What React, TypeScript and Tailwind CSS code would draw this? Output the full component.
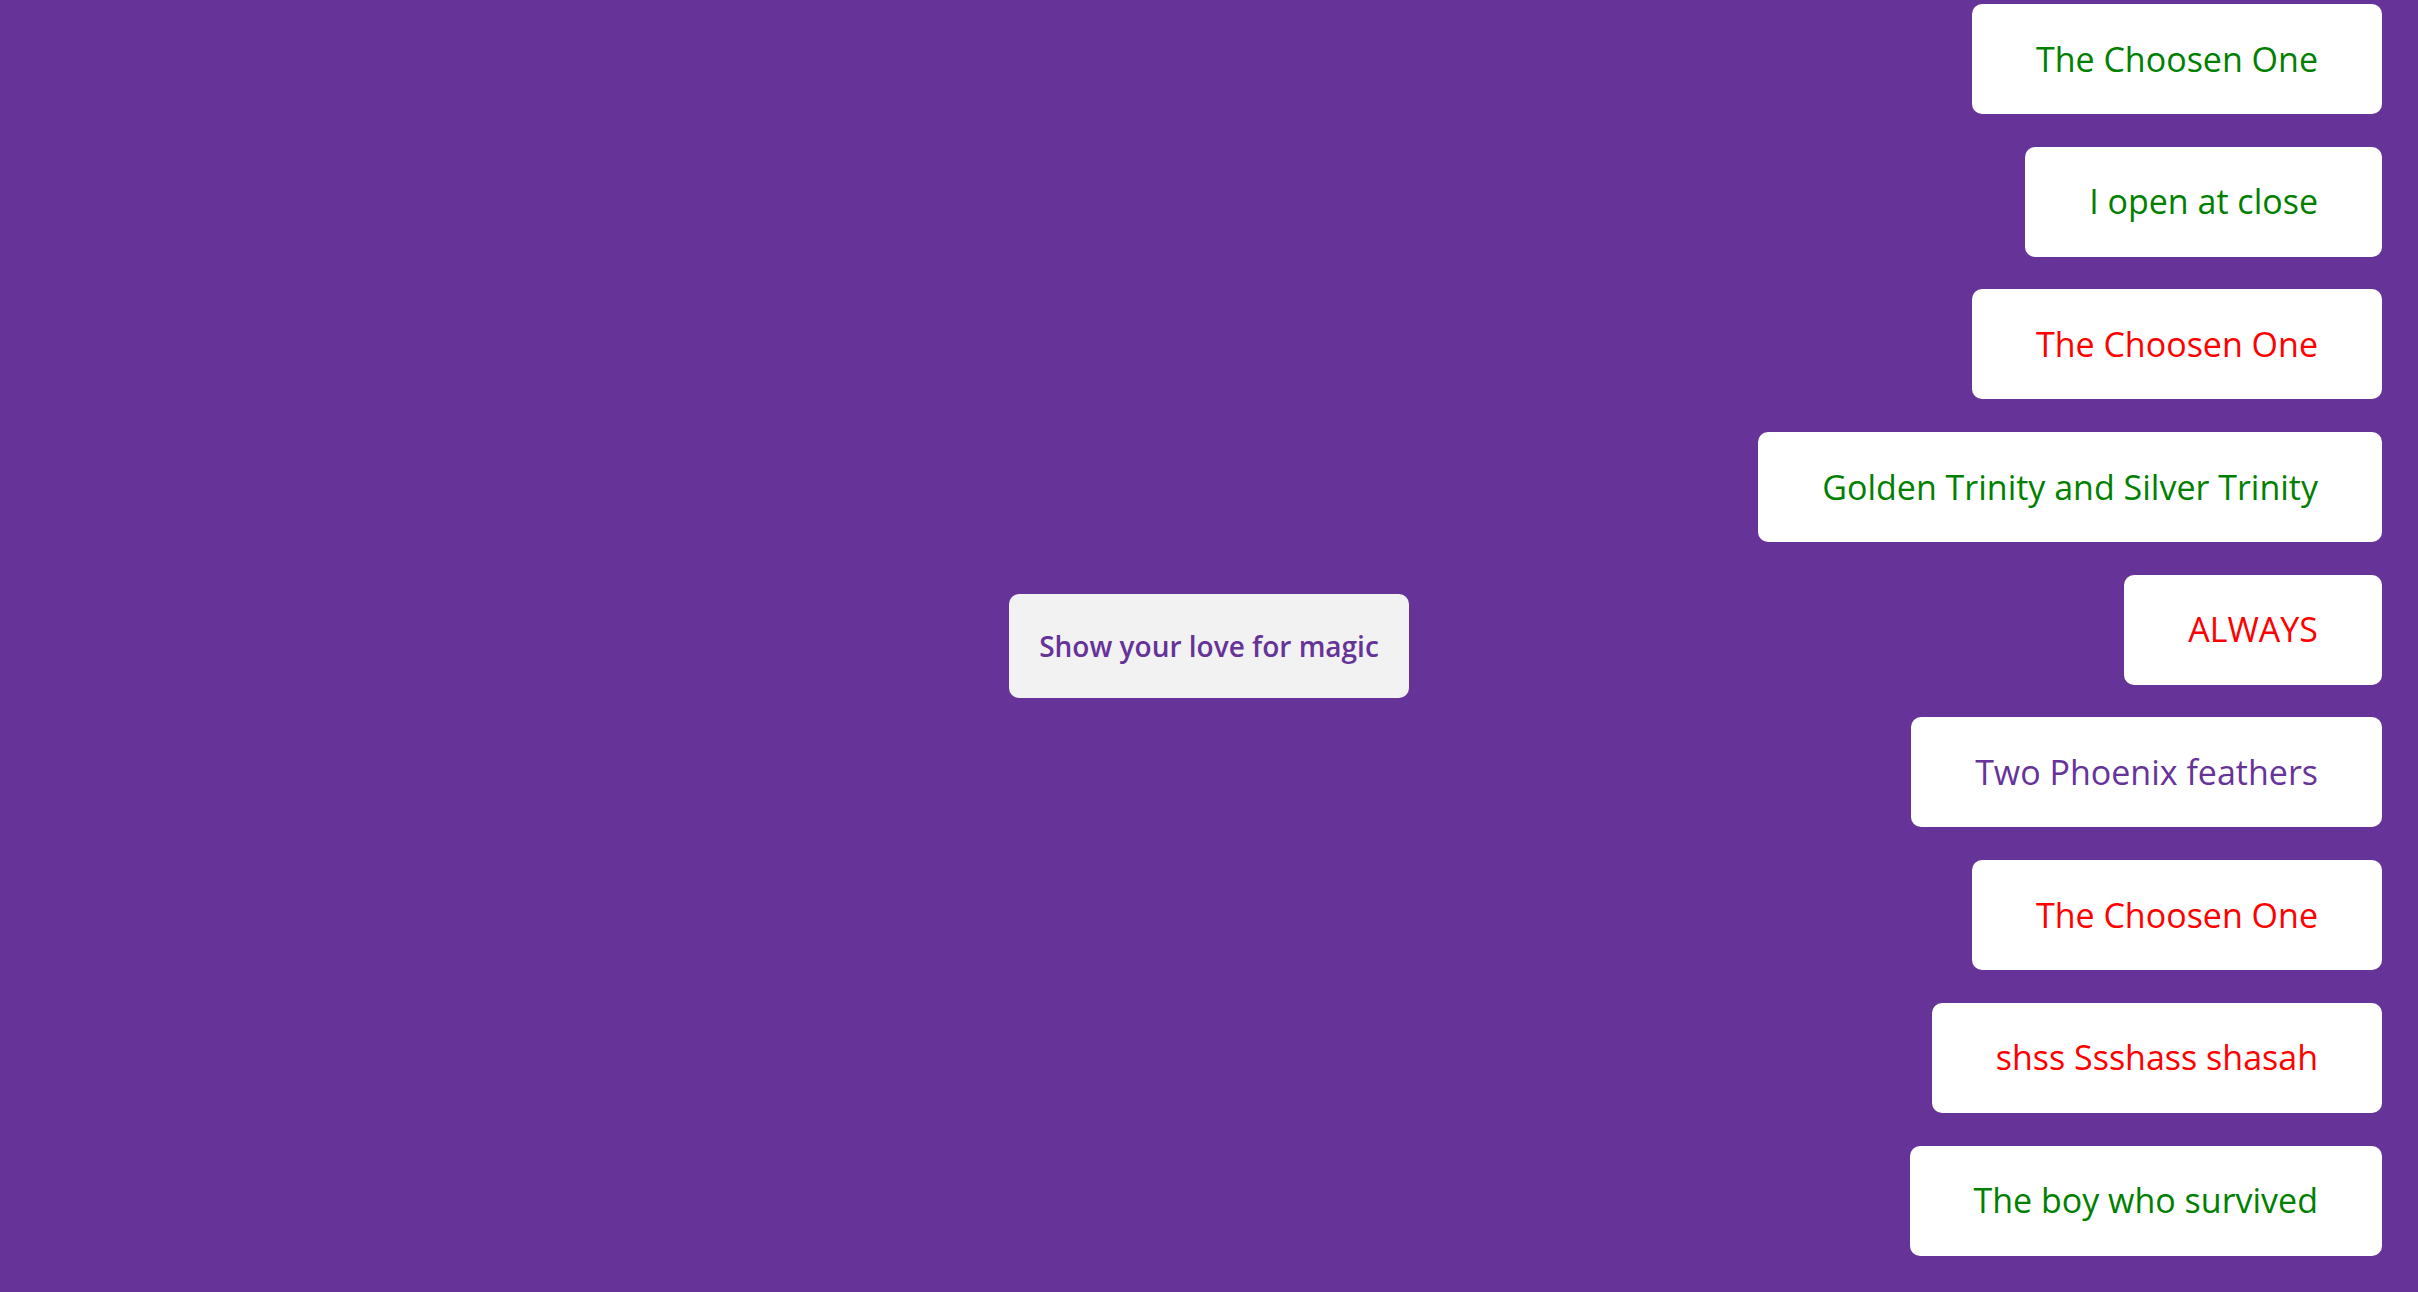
import React from 'react';

const quotes = [
  { text: 'The Choosen One', color: 'text-[#008000]' },
  { text: 'I open at close', color: 'text-[#008000]' },
  { text: 'The Choosen One', color: 'text-[#ff0000]' },
  { text: 'Golden Trinity and Silver Trinity', color: 'text-[#008000]' },
  { text: 'ALWAYS', color: 'text-[#ff0000]' },
  { text: 'Two Phoenix feathers', color: 'text-[#663399]' },
  { text: 'The Choosen One', color: 'text-[#ff0000]' },
  { text: 'shss Ssshass shasah', color: 'text-[#ff0000]' },
  { text: 'The boy who survived', color: 'text-[#008000]' },
];

export default function App() {
  return (
    <div
      className="w-full h-[1292px] overflow-hidden bg-[#663399] grid grid-cols-[1fr_auto_1fr]"
      style={{ fontFamily: '"Open Sans", sans-serif' }}
    >
      <div />
      <div className="flex items-center">
        <button className="w-[400px] h-[104px] rounded-[10px] bg-[#f2f2f2] text-[#663399] text-[28px] font-semibold">
          Show your love for magic
        </button>
      </div>
      <div className="flex flex-col items-end gap-[32.7px] pt-[4px] pr-[36px]">
        {quotes.map((q, i) => (
          <div
            key={i}
            className={`h-[110px] px-16 flex items-center rounded-[10px] bg-white text-[34px] ${q.color}`}
          >
            {q.text}
          </div>
        ))}
      </div>
    </div>
  );
}
